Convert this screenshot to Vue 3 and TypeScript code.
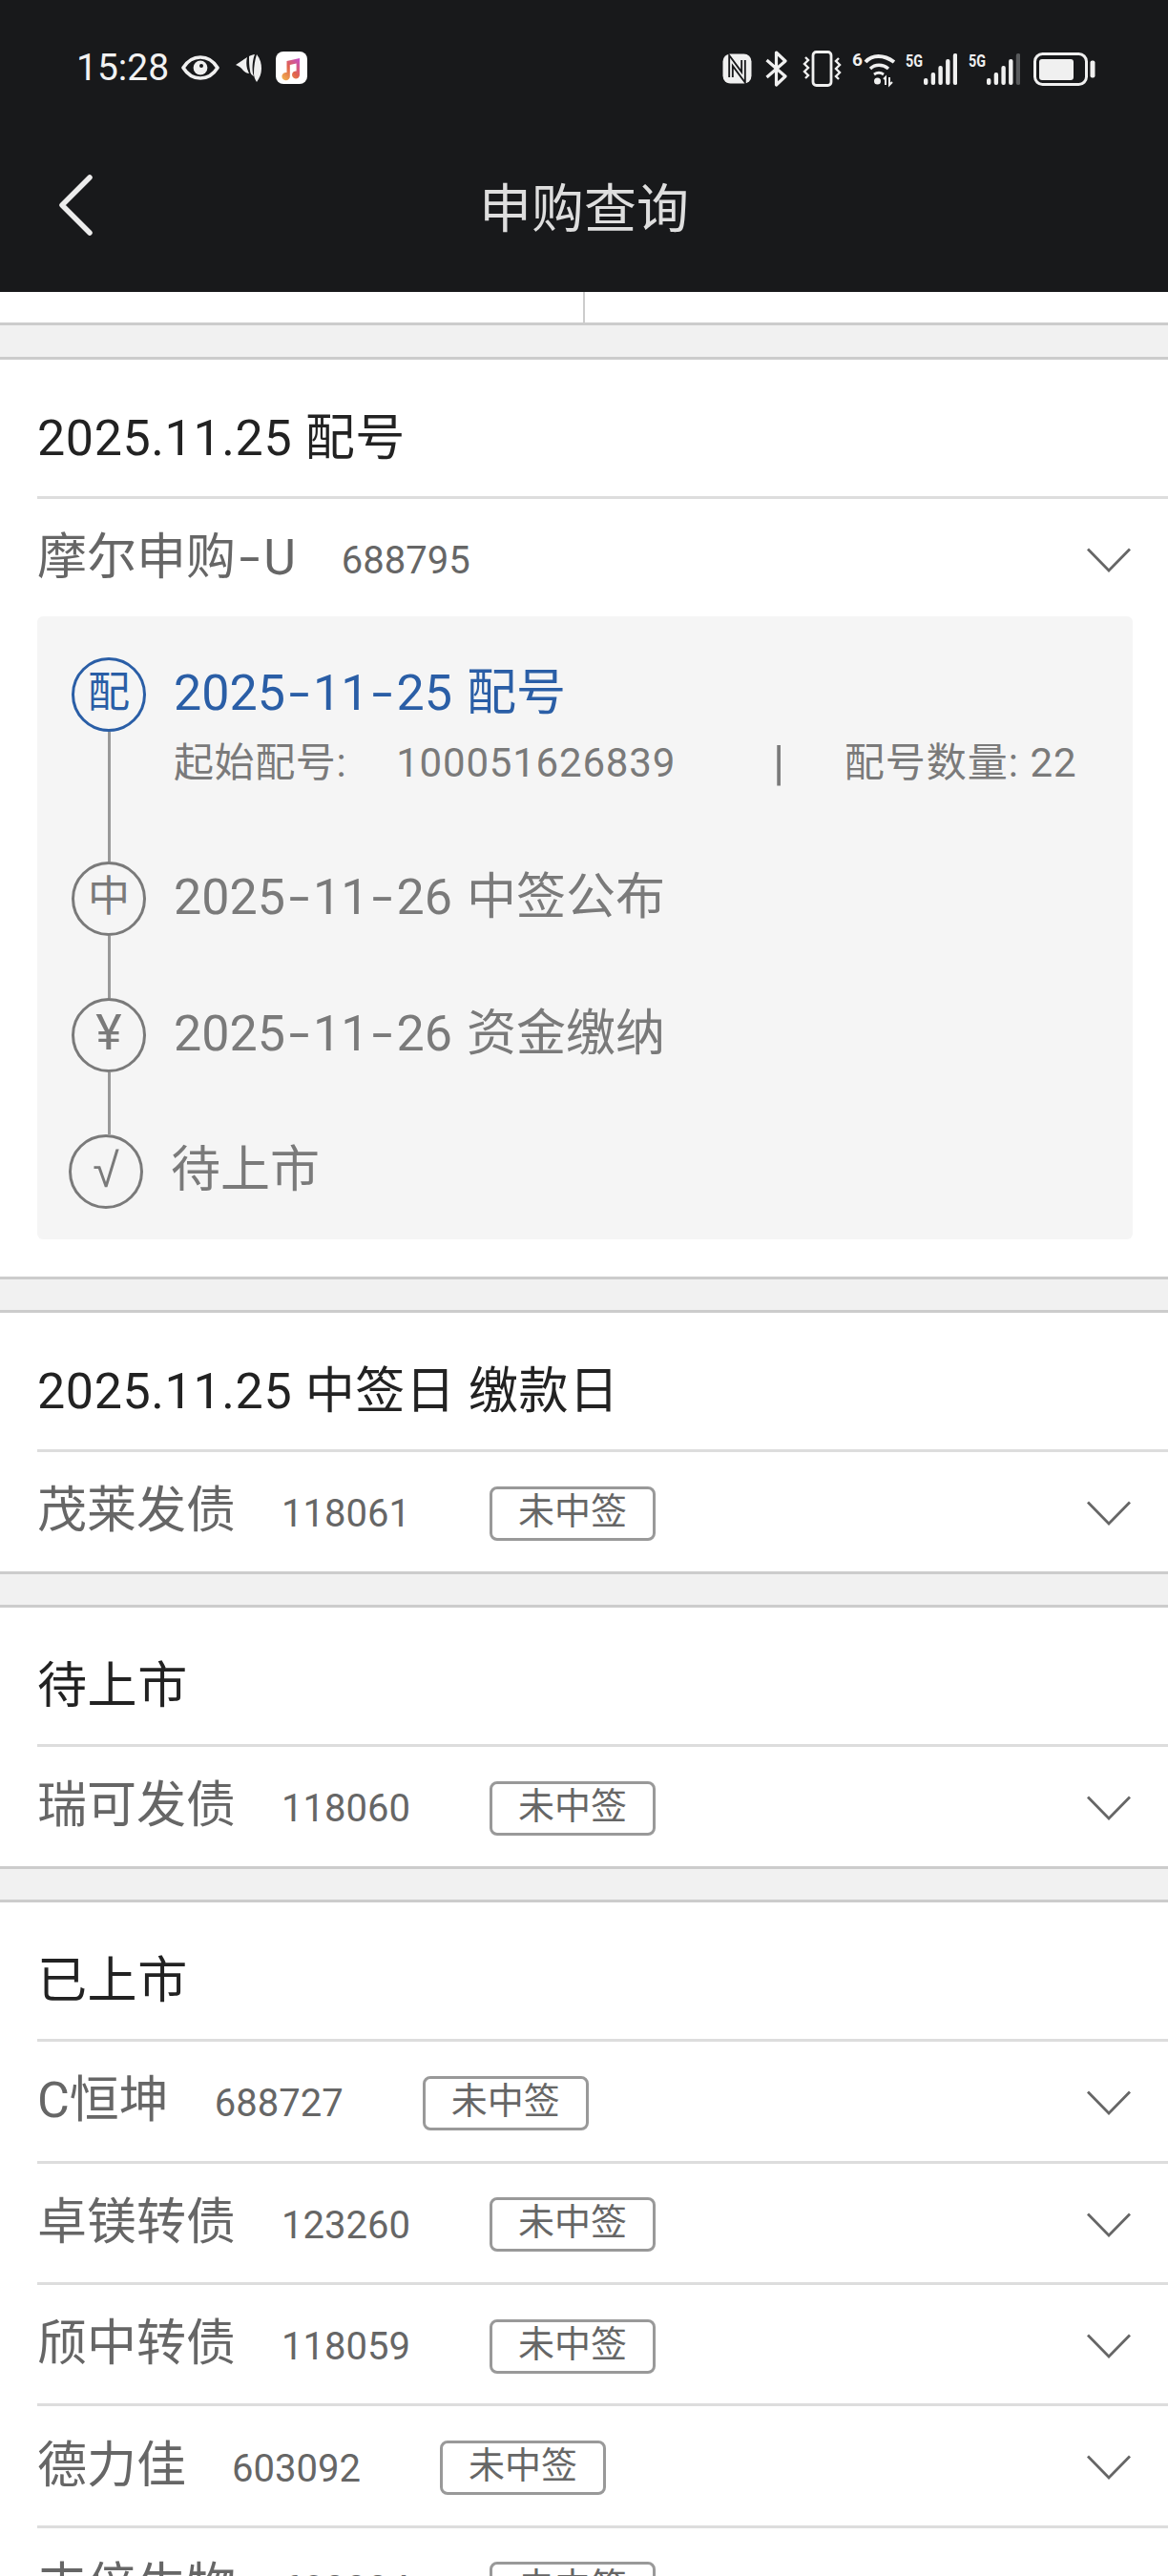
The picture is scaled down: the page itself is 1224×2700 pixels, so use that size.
<script setup lang="ts">
interface Stock {
  name: string
  code: string
}

interface Group {
  title: string
  stocks: Stock[]
}

interface Step {
  mark: string
  date?: string[]
  label: string
}

const steps: Step[] = [
  { mark: '配', date: ['2025', '11', '25'], label: '配号' },
  { mark: '中', date: ['2025', '11', '26'], label: '中签公布' },
  { mark: '¥', date: ['2025', '11', '26'], label: '资金缴纳' },
  { mark: '√', label: '待上市' }
]

const groups: Group[] = [
  { title: '2025.11.25 中签日 缴款日', stocks: [{ name: '茂莱发债', code: '118061' }] },
  { title: '待上市', stocks: [{ name: '瑞可发债', code: '118060' }] },
  {
    title: '已上市',
    stocks: [
      { name: 'C恒坤', code: '688727' },
      { name: '卓镁转债', code: '123260' },
      { name: '颀中转债', code: '118059' },
      { name: '德力佳', code: '603092' },
      { name: '丰倍生物', code: '603334' }
    ]
  }
]

const bars = [
  { x: 0, h: 7 },
  { x: 7.7, h: 13 },
  { x: 15.4, h: 20 },
  { x: 23.1, h: 27 },
  { x: 30.8, h: 33 }
]
</script>

<template>
  <div class="page">
    <header class="topbar">
      <div class="status">
        <div class="status-left">
          <span class="time">15:28</span>
          <svg class="eye" width="40" height="26" viewBox="0 0 40 26">
            <path d="M2 13C7 5 13 2 20 2s13 3 18 11c-5 8-11 11-18 11S7 21 2 13Z" fill="none" stroke="#f0f0f0" stroke-width="3.6" stroke-linejoin="round" />
            <circle cx="20" cy="13" r="7.4" fill="#f0f0f0" />
            <circle cx="21" cy="11" r="2" fill="#18191b" />
          </svg>
          <svg class="wing" width="27" height="30" viewBox="0 0 27 30">
            <path d="M0 12 12 4c-1 4-1 8 0 12l2 5c-2 0-4-1-6-3-2-3-5-5-8-6Z" fill="#f0f0f0" />
            <path d="M14 3c2-1 4-2 6-2-2 5-3 12-2 20l1 3c-2-1-4-3-4-6-1-5-1-10-1-15Z" fill="#f0f0f0" />
            <path d="M22 1c4 5 5 10 5 15 0 5-2 10-5 14-2-3-3-6-3-9 0-7 1-14 3-20Z" fill="#f0f0f0" />
          </svg>
          <svg class="music" width="33" height="34" viewBox="0 0 33 34">
            <defs>
              <linearGradient id="note" x1="0.1" y1="1" x2="0.9" y2="0">
                <stop offset="0" stop-color="#f0b04e" />
                <stop offset="0.5" stop-color="#e0624c" />
                <stop offset="1" stop-color="#c74fc4" />
              </linearGradient>
            </defs>
            <rect width="33" height="34" rx="8" fill="#fff" />
            <path d="M11.500 10 25 7v17.500a4 4 0 1 1-3.400-4V12.400l-6.800 1.500V26a4.200 4.200 0 1 1-3.300-4Z" fill="url(#note)" />
          </svg>
        </div>
        <div class="status-right">
          <svg width="31" height="32" viewBox="0 0 31 32">
            <rect x="0.500" y="0.500" width="30" height="31" rx="8" fill="#f0f0f0" />
            <path d="M9 25V7.500L22 25V7" fill="none" stroke="#18191b" stroke-width="5.500" />
            <path d="M9 25V7.500L22 25V7" fill="none" stroke="#f0f0f0" stroke-width="1.800" />
          </svg>
          <svg class="bt" width="25" height="38" viewBox="0 0 25 38">
            <path d="M2.500 10 22 27l-9.500 9V2L22 11 2.500 28" fill="none" stroke="#f0f0f0" stroke-width="3.200" stroke-linejoin="round" />
          </svg>
          <svg class="vib" width="41" height="38" viewBox="0 0 41 38">
            <rect x="11" y="1.500" width="19" height="35" rx="3.500" fill="none" stroke="#f0f0f0" stroke-width="2.800" />
            <path d="M3 7l3 3-4 4 4 4-4 4 4 4-3 3M38 8l-3 3 4 4-4 4 4 4-4 4 3 3" fill="none" stroke="#f0f0f0" stroke-width="2.400" />
          </svg>
          <svg class="wifi" width="48" height="44" viewBox="0 -4 48 44">
            <text x="0" y="15" class="mini">6</text>
            <path d="M14 11C21 3 33 3 44 11" fill="none" stroke="#f0f0f0" stroke-width="4" />
            <path d="M19 18c5-5 13-5 19 0" fill="none" stroke="#f0f0f0" stroke-width="3.400" />
            <path d="M23 24c3-2 7-2 10 0" fill="none" stroke="#f0f0f0" stroke-width="3" />
            <circle cx="26.500" cy="31" r="3.500" fill="#f0f0f0" />
            <path d="M35 35v-8l-2 2M39 27v8l3-3" fill="none" stroke="#f0f0f0" stroke-width="2" />
          </svg>
          <svg class="signal" width="54" height="42" viewBox="0 -4 54 42">
            <text x="0" y="15" class="mini" textLength="18" lengthAdjust="spacingAndGlyphs">5G</text>
            <rect v-for="bar in bars" :key="bar.x" :x="19 + bar.x" :y="34 - bar.h" width="4.400" :height="bar.h" rx="2" fill="#f0f0f0" />
          </svg>
          <svg class="signal second" width="54" height="42" viewBox="0 -4 54 42">
            <text x="0" y="15" class="mini" textLength="18" lengthAdjust="spacingAndGlyphs">5G</text>
            <rect v-for="(bar, i) in bars" :key="bar.x" :x="19 + bar.x" :y="34 - bar.h" width="4.400" :height="bar.h" rx="2" :fill="i === 4 ? '#585a5c' : '#f0f0f0'" />
          </svg>
          <svg class="battery" width="65" height="35" viewBox="0 0 65 35">
            <rect x="1.500" y="1.500" width="54" height="32" rx="8" fill="none" stroke="#f0f0f0" stroke-width="3" />
            <rect x="6" y="7" width="36" height="22" rx="3" fill="#f0f0f0" />
            <rect x="59.500" y="8.500" width="5" height="18" rx="2" fill="#f0f0f0" />
          </svg>
        </div>
      </div>
      <div class="navbar">
        <svg class="back" width="40" height="66" viewBox="0 0 40 66">
          <path d="M35 4 6 33l29 29" fill="none" stroke="#ececec" stroke-width="5.500" stroke-linecap="round" stroke-linejoin="round" />
        </svg>
        <h1 class="nav-title">申购查询</h1>
      </div>
    </header>

    <div class="tabs-end">
      <div class="tab-cell"></div>
      <div class="tab-cell"></div>
    </div>
    <div class="gap"></div>

    <section class="group">
      <h2 class="group-title">2025.11.25 配号</h2>
      <div class="row">
        <span class="name">摩尔申购<span class="dash">-</span>U</span>
        <span class="code">688795</span>
        <svg class="arrow" width="46" height="26" viewBox="0 0 46 26">
          <path d="M1 1.500 23 24 45 1.500" fill="none" stroke="#666" stroke-width="2.800" />
        </svg>
      </div>
      <div class="panel">
        <div
          v-for="(step, i) in steps"
          :key="step.mark"
          class="step"
          :class="{ active: i === 0, last: i === steps.length - 1, first: i === 0 }"
        >
          <div class="marker">
            <span class="circle">{{ step.mark }}</span>
            <span v-if="i < steps.length - 1" class="line"></span>
          </div>
          <div class="step-body">
            <div class="step-title">
              <template v-if="step.date">{{ step.date[0] }}<span class="dash">-</span>{{ step.date[1] }}<span class="dash">-</span>{{ step.date[2] + ' ' }}</template>{{ step.label }}
            </div>
            <div v-if="i === 0" class="step-sub">
              <span>起始配号:</span>
              <span class="start-no">100051626839</span>
              <span class="sep">|</span>
              <span class="count">配号数量: 22</span>
            </div>
          </div>
        </div>
      </div>
    </section>

    <template v-for="group in groups" :key="group.title">
      <div class="gap"></div>
      <section class="group">
        <h2 class="group-title">{{ group.title }}</h2>
        <div v-for="stock in group.stocks" :key="stock.code" class="row">
          <span class="name">{{ stock.name }}</span>
          <span class="code">{{ stock.code }}</span>
          <span class="tag">未中签</span>
          <svg class="arrow" width="46" height="26" viewBox="0 0 46 26">
            <path d="M1 1.500 23 24 45 1.500" fill="none" stroke="#666" stroke-width="2.800" />
          </svg>
        </div>
      </section>
    </template>
  </div>
</template>

<style scoped>
.page {
  height: 2700px;
  overflow: hidden;
  background: #fff;
  font-family: Roboto, "Noto Sans CJK SC", sans-serif;
}

.topbar {
  height: 306px;
  background: #18191b;
}

.status {
  height: 142px;
  box-sizing: border-box;
  padding: 53px 76px 0 80px;
  display: flex;
  justify-content: space-between;
  align-items: flex-start;
}

.status-left {
  display: flex;
  align-items: center;
  height: 36px;
}

.time {
  font-size: 39px;
  line-height: 36px;
  color: #f2f2f2;
}

.eye {
  margin-left: 13px;
}

.wing {
  margin-left: 17px;
}

.music {
  margin-left: 15px;
}

.status-right {
  display: flex;
  align-items: center;
  height: 38px;
}

.bt {
  margin-left: 13px;
}

.vib {
  margin-left: 15px;
}

.wifi {
  margin-left: 11px;
}

.signal {
  margin-left: 8px;
}

.signal.second {
  margin-left: 12px;
}

.battery {
  margin-left: 14px;
}

.mini {
  font-size: 19px;
  font-weight: 700;
  fill: #f0f0f0;
}

.navbar {
  position: relative;
  height: 164px;
  display: flex;
  align-items: center;
  justify-content: center;
}

.back {
  position: absolute;
  left: 59px;
  top: 40px;
}

.nav-title {
  margin: -20px 0 0;
  font-size: 55px;
  font-weight: 400;
  color: #dedede;
}

.tabs-end {
  display: flex;
  height: 32px;
}

.tab-cell {
  flex: 1;
}

.tab-cell:first-child {
  border-right: 2px solid #ccc;
}

.gap {
  height: 32.600px;
  background: #f1f1f1;
  border-top: 3px solid #ccc;
  border-bottom: 3px solid #ccc;
}

.group-title {
  margin: 0 0 0 39px;
  height: 146px;
  box-sizing: border-box;
  padding-top: 51px;
  font-size: 52px;
  line-height: 64px;
  font-weight: 400;
  letter-spacing: 0.6px;
  color: #222;
  border-bottom: 3px solid #ddd;
}

.row {
  display: flex;
  align-items: center;
  height: 124.400px;
  margin-left: 39px;
  position: relative;
  color: #666;
}

.row + .row {
  border-top: 3px solid #ddd;
}

.name {
  font-size: 52px;
  line-height: 64px;
}

.code {
  font-size: 40px;
  margin-left: 48px;
  margin-top: 5px;
}

.tag {
  margin-left: 83px;
  margin-top: 4px;
  width: 174px;
  height: 57px;
  box-sizing: border-box;
  border: 3px solid #999;
  border-radius: 8px;
  font-size: 38px;
  line-height: 46px;
  text-align: center;
}

.arrow {
  position: absolute;
  right: 39px;
  top: 51px;
}

.dash {
  display: inline-block;
  width: 0.56em;
  text-align: center;
  transform: scaleX(1.5);
}

.panel {
  margin: -1.400px 37px 39px 39px;
  height: 653px;
  padding: 43px 0 0 36px;
  box-sizing: border-box;
  background: #f5f5f5;
  border-radius: 6px;
  color: #7a7a7a;
}

.step {
  display: flex;
  height: 143px;
}

.step.first {
  height: 214px;
}

.step.last {
  height: 77px;
  margin-left: -3px;
}

.marker {
  width: 78px;
  display: flex;
  flex-direction: column;
  align-items: center;
}

.circle {
  flex: none;
  width: 78px;
  height: 78px;
  box-sizing: border-box;
  border: 3px solid #7a7a7a;
  border-radius: 50%;
  font-size: 44px;
  line-height: 68px;
  text-align: center;
}

.step:nth-child(3) .circle {
  font-size: 52px;
}

.step.last .circle {
  font-family: "Liberation Sans", sans-serif;
  font-size: 50px;
  line-height: 70px;
}

.line {
  flex: 1;
  width: 3px;
  background: #999;
}

.step-body {
  margin-left: 29px;
}

.step-title {
  font-size: 52px;
  line-height: 76px;
  word-spacing: 2px;
  white-space: pre-wrap;
}

.step-sub {
  margin-top: 10px;
  font-size: 42px;
  line-height: 50px;
  letter-spacing: 0.6px;
  display: flex;
  align-items: center;
}

.start-no {
  margin-left: 52px;
  letter-spacing: 0.8px;
}

.sep {
  font-size: 50px;
  margin: 0 62px 0 102px;
}

.count {
  letter-spacing: 1px;
}

.active {
  color: #2a5ea6;
}

.active .circle {
  border-color: #2a5ea6;
}

.active .step-sub {
  color: #7a7a7a;
}
</style>
